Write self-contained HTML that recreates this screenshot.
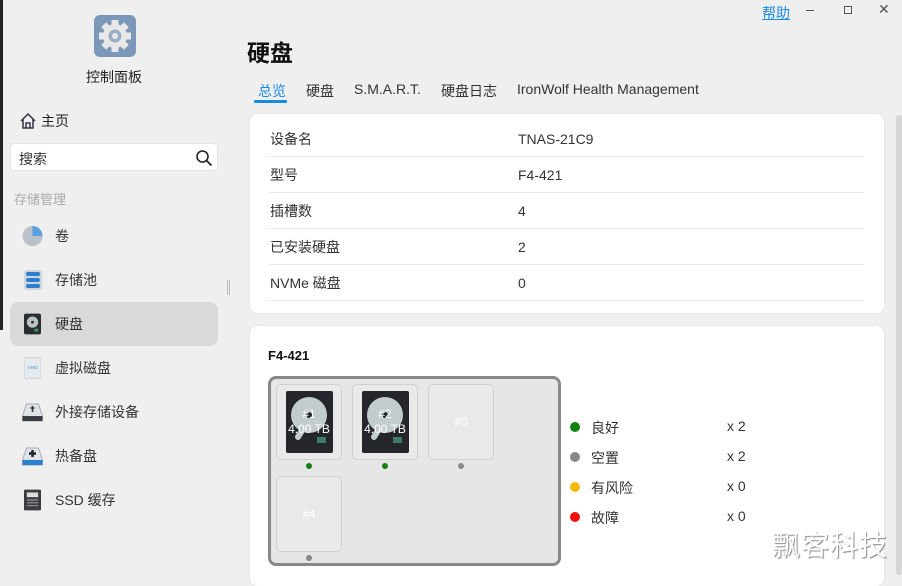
<!DOCTYPE html>
<html><head><meta charset="utf-8"><style>
*{margin:0;padding:0;box-sizing:border-box}
body{width:902px;height:575px;overflow:hidden;background:#efefef;font-family:"Liberation Sans","Noto Sans CJK SC",sans-serif;color:#333;position:relative;font-size:14px}
.a{position:absolute}
.nav{position:absolute;left:10px;width:208px;height:44px;border-radius:8px;display:flex;align-items:center}
.nav .ic{position:absolute;left:13px;width:20px;height:22px}
.nav span{position:absolute;left:45px;font-size:14px;color:#333}
.card{position:absolute;background:#fff;border-radius:8px;box-shadow:0 0 2px rgba(0,0,0,.08)}
.row{position:absolute;left:18px;width:596px;height:36px;border-bottom:1px solid #eaeaea;font-size:14px;line-height:36px}
.row b{font-weight:normal;position:absolute;left:2px}
.row i{font-style:normal;position:absolute;left:250px}
.slot{position:absolute;width:66px;height:76px;border:1px solid #cfcfcf;border-radius:5px;background:#e9e9e9;color:#fff;text-align:center;font-size:12px}
.dot{position:absolute;width:6px;height:6px;border-radius:50%}
.hdd{position:absolute;left:9px;top:6px;width:47px;height:62px;background:#25262b;border-radius:2px;overflow:hidden}
.lg{position:absolute;left:570px;font-size:14px}
.lg .d{position:absolute;left:0;top:4px;width:10px;height:10px;border-radius:50%}
.lg span{position:absolute;left:21px;white-space:nowrap}
.lg em{font-style:normal;position:absolute;left:157px;white-space:nowrap}
</style></head><body>
<div class="a" style="left:0;top:0;width:3px;height:330px;background:#222"></div>
<div class="a" style="left:94px;top:15px;width:42px;height:42px;border-radius:6px;background:#7b98b8">
<svg width="42" height="42" viewBox="0 0 42 42"><g fill="#e8e8e8"><circle cx="21" cy="21" r="12"/><g stroke="#e8e8e8" stroke-width="7"><line x1="21" y1="5" x2="21" y2="37"/><line x1="5" y1="21" x2="37" y2="21"/><line x1="9.7" y1="9.7" x2="32.3" y2="32.3"/><line x1="32.3" y1="9.7" x2="9.7" y2="32.3"/></g></g><circle cx="21" cy="21" r="6.5" fill="#9aaec4"/><circle cx="21" cy="21" r="3" fill="#e8e8e8"/></svg></div>
<div class="a" style="left:86px;top:67px;font-size:14px;color:#222">控制面板</div>
<svg class="a" style="left:19px;top:112px" width="18" height="18" viewBox="0 0 18 18"><path d="M2 9L9 2l7 7M4 7v9h10V7M7 16v-5h4v5" fill="none" stroke="#334" stroke-width="1.5"/></svg>
<div class="a" style="left:41px;top:111px;font-size:14px;color:#222">主页</div>
<div class="a" style="left:10px;top:143px;width:208px;height:28px;background:#fff;border-radius:5px;border:1px solid #e4e4e4"><span style="position:absolute;left:8px;top:5px;font-size:14px;color:#333">搜索</span>
<svg style="position:absolute;right:4px;top:5px" width="18" height="18" viewBox="0 0 18 18"><circle cx="7.5" cy="7.5" r="5.5" fill="none" stroke="#222" stroke-width="1.6"/><path d="M11.5 11.5l5 5" stroke="#222" stroke-width="1.8"/></svg></div>
<div class="a" style="left:14px;top:189px;font-size:13px;color:#aaa">存储管理</div>
<div class="nav" style="top:214px"><svg class="ic" viewBox="0 0 22 22" style="left:11px;width:23px"><circle cx="11" cy="11" r="10" fill="#b9c2c8"/><path d="M11 11V1a10 10 0 0 1 10 10z" fill="#5b9fdc"/></svg><span>卷</span></div>
<div class="nav" style="top:258px"><svg class="ic" viewBox="0 0 20 22"><rect x="1" y="1" width="18" height="20" rx="3" fill="#cfd6dc"/><rect x="3" y="3" width="14" height="4" rx="2" fill="#2b7fd0"/><rect x="3" y="9" width="14" height="4" rx="2" fill="#2b7fd0"/><rect x="3" y="15" width="14" height="4" rx="2" fill="#2b7fd0"/></svg><span>存储池</span></div>
<div class="nav" style="top:302px;background:#d9d9d9"><svg class="ic" viewBox="0 0 18 22" style="left:14px;width:17px"><rect width="18" height="22" rx="2" fill="#2a2c30"/><circle cx="9" cy="9" r="6" fill="#b8c4c4"/><circle cx="9" cy="9" r="1.5" fill="#2a2c30"/><rect x="11" y="16" width="4" height="3" fill="#3a9a6a"/></svg><span>硬盘</span></div>
<div class="nav" style="top:346px"><svg class="ic" viewBox="0 0 18 22" style="left:14px;width:17px"><rect width="18" height="22" rx="2" fill="#e4eaee" stroke="#c8d0d4"/><text x="9" y="12" font-size="5" fill="#3b8fd8" text-anchor="middle" font-family="Liberation Sans">VHD</text></svg><span>虚拟磁盘</span></div>
<div class="nav" style="top:390px"><svg class="ic" viewBox="0 0 22 22" style="left:11px;width:23px"><path d="M5 3h12l4 12v5H1v-5z" fill="#dfe4e8" stroke="#aab"/><rect x="1" y="15" width="20" height="5" fill="#3a3d44"/><path d="M11 5v6M9 7h4" stroke="#333" stroke-width="1.5"/></svg><span>外接存储设备</span></div>
<div class="nav" style="top:434px"><svg class="ic" viewBox="0 0 22 22" style="left:11px;width:23px"><path d="M5 3h12l4 12v5H1v-5z" fill="#dfe4e8" stroke="#aab"/><rect x="1" y="15" width="20" height="5" fill="#2b7fd0"/><path d="M11 5v7M7.5 8.5h7" stroke="#222" stroke-width="2.5"/></svg><span>热备盘</span></div>
<div class="nav" style="top:478px"><svg class="ic" viewBox="0 0 18 22" style="left:14px;width:17px"><rect width="18" height="22" rx="1" fill="#3a3c40"/><rect x="3" y="3" width="12" height="5" fill="#ddd"/><path d="M3 11h12M3 14h12M3 17h12" stroke="#aaa"/></svg><span>SSD 缓存</span></div>
<div class="a" style="left:227px;top:280px;width:3px;height:15px;border-left:1px solid #bbb;border-right:1px solid #bbb"></div>

<div class="a" style="left:762px;top:3px;font-size:14px;color:#1a8ae8;text-decoration:underline">帮助</div>
<div class="a" style="left:806px;top:10px;width:8px;height:1px;background:#555"></div>
<div class="a" style="left:844px;top:6px;width:8px;height:8px;border:1px solid #555"></div>
<div class="a" style="left:878px;top:1px;font-size:14px;color:#555">✕</div>
<div class="a" style="left:247px;top:34px;font-size:23px;font-weight:bold;color:#111">硬盘</div>
<div class="a" style="left:258px;top:81px;font-size:14px;color:#1a8ae8">总览</div>
<div class="a" style="left:254px;top:100px;width:33px;height:3px;background:#1a8ae8;border-radius:1px"></div>
<div class="a" style="left:306px;top:81px;font-size:14px;color:#333">硬盘</div>
<div class="a" style="left:354px;top:81px;font-size:14px;color:#333">S.M.A.R.T.</div>
<div class="a" style="left:441px;top:81px;font-size:14px;color:#333">硬盘日志</div>
<div class="a" style="left:517px;top:81px;font-size:14px;color:#333">IronWolf Health Management</div>

<div class="a" style="left:896px;top:115px;width:6px;height:460px;background:#d6d6d6;border-radius:3px"></div>
<div class="card" style="left:250px;top:114px;width:634px;height:199px">
<div class="row" style="top:7px"><b>设备名</b><i>TNAS-21C9</i></div>
<div class="row" style="top:43px"><b>型号</b><i>F4-421</i></div>
<div class="row" style="top:79px"><b>插槽数</b><i>4</i></div>
<div class="row" style="top:115px"><b>已安装硬盘</b><i>2</i></div>
<div class="row" style="top:151px"><b>NVMe 磁盘</b><i>0</i></div>
</div>
<div class="card" style="left:250px;top:326px;width:634px;height:260px"></div>
<div class="a" style="left:268px;top:348px;font-size:13px;font-weight:bold;color:#111">F4-421</div>
<div class="a" style="left:268px;top:376px;width:293px;height:190px;border:3px solid #888;border-radius:8px;background:#e6e6e6"></div>
<div class="slot" style="left:276px;top:384px"><div class="hdd"><svg width="47" height="62"><circle cx="23" cy="24" r="18" fill="#c3cccc"/><path d="M22 30l-10 16" stroke="#c3cccc" stroke-width="6" stroke-linecap="round"/><circle cx="23" cy="24" r="3" fill="#25262b"/><rect x="31" y="46" width="9" height="6" fill="#3f7a68"/></svg></div><div style="position:absolute;top:22px;width:100%;font-size:12px;line-height:15px">#1<br>4.00 TB</div></div>
<div class="dot" style="left:306px;top:463px;background:#108010"></div>
<div class="slot" style="left:352px;top:384px"><div class="hdd"><svg width="47" height="62"><circle cx="23" cy="24" r="18" fill="#c3cccc"/><path d="M22 30l-10 16" stroke="#c3cccc" stroke-width="6" stroke-linecap="round"/><circle cx="23" cy="24" r="3" fill="#25262b"/><rect x="31" y="46" width="9" height="6" fill="#3f7a68"/></svg></div><div style="position:absolute;top:22px;width:100%;font-size:12px;line-height:15px">#2<br>4.00 TB</div></div>
<div class="dot" style="left:382px;top:463px;background:#108010"></div>
<div class="slot" style="left:428px;top:384px"><div style="position:absolute;top:30px;width:100%">#3</div></div>
<div class="dot" style="left:458px;top:463px;background:#888"></div>
<div class="slot" style="left:276px;top:476px"><div style="position:absolute;top:30px;width:100%">#4</div></div>
<div class="dot" style="left:306px;top:555px;background:#888"></div>
<div class="lg" style="top:418px"><div class="d" style="background:#108010"></div><span>良好</span><em>x 2</em></div>
<div class="lg" style="top:448px"><div class="d" style="background:#888"></div><span>空置</span><em>x 2</em></div>
<div class="lg" style="top:478px"><div class="d" style="background:#f6b90c"></div><span>有风险</span><em>x 0</em></div>
<div class="lg" style="top:508px"><div class="d" style="background:#ee1111"></div><span>故障</span><em>x 0</em></div>
<div class="a" style="left:772px;top:524px;font-size:28px;color:#fff;text-shadow:1px 1px 1px #888;letter-spacing:1px">飘客科技</div>
</body></html>
